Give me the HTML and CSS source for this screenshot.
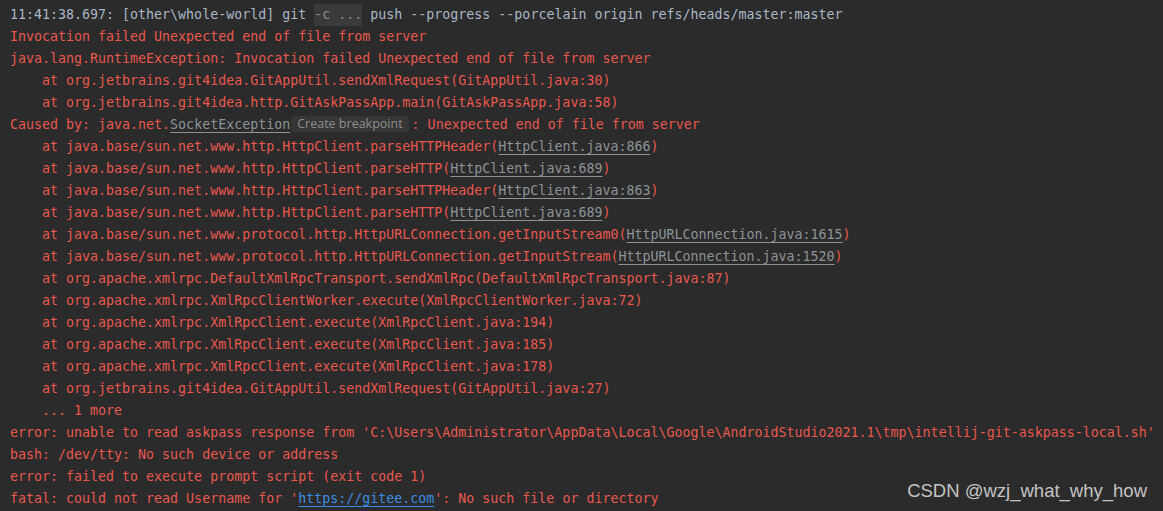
FILE: index.html
```html
<!DOCTYPE html>
<html lang="en">
<head>
    <meta charset="UTF-8">
    <title>Git Console</title>
    <link rel="stylesheet" href="styles.css">
</head>
<body>
    <main class="console">
        <div class="line sys">11:41:38.697: [other\whole-world] git <span class="fold">-c ...</span> push --progress --porcelain origin refs/heads/master:master</div>
        <div class="line err">Invocation failed Unexpected end of file from server</div>
        <div class="line err">java.lang.RuntimeException: Invocation failed Unexpected end of file from server</div>
        <div class="line err">    at org.jetbrains.git4idea.GitAppUtil.sendXmlRequest(GitAppUtil.java:30)</div>
        <div class="line err">    at org.jetbrains.git4idea.http.GitAskPassApp.main(GitAskPassApp.java:58)</div>
        <div class="line err">Caused by: java.net.<span class="ref">SocketException</span><span class="hint">Create breakpoint</span>: Unexpected end of file from server</div>
        <div class="line err">    at java.base/sun.net.www.http.HttpClient.parseHTTPHeader(<span class="ref">HttpClient.java:866</span>)</div>
        <div class="line err">    at java.base/sun.net.www.http.HttpClient.parseHTTP(<span class="ref">HttpClient.java:689</span>)</div>
        <div class="line err">    at java.base/sun.net.www.http.HttpClient.parseHTTPHeader(<span class="ref">HttpClient.java:863</span>)</div>
        <div class="line err">    at java.base/sun.net.www.http.HttpClient.parseHTTP(<span class="ref">HttpClient.java:689</span>)</div>
        <div class="line err">    at java.base/sun.net.www.protocol.http.HttpURLConnection.getInputStream0(<span class="ref">HttpURLConnection.java:1615</span>)</div>
        <div class="line err">    at java.base/sun.net.www.protocol.http.HttpURLConnection.getInputStream(<span class="ref">HttpURLConnection.java:1520</span>)</div>
        <div class="line err">    at org.apache.xmlrpc.DefaultXmlRpcTransport.sendXmlRpc(DefaultXmlRpcTransport.java:87)</div>
        <div class="line err">    at org.apache.xmlrpc.XmlRpcClientWorker.execute(XmlRpcClientWorker.java:72)</div>
        <div class="line err">    at org.apache.xmlrpc.XmlRpcClient.execute(XmlRpcClient.java:194)</div>
        <div class="line err">    at org.apache.xmlrpc.XmlRpcClient.execute(XmlRpcClient.java:185)</div>
        <div class="line err">    at org.apache.xmlrpc.XmlRpcClient.execute(XmlRpcClient.java:178)</div>
        <div class="line err">    at org.jetbrains.git4idea.GitAppUtil.sendXmlRequest(GitAppUtil.java:27)</div>
        <div class="line err">    ... 1 more</div>
        <div class="line err">error: unable to read askpass response from 'C:\Users\Administrator\AppData\Local\Google\AndroidStudio2021.1\tmp\intellij-git-askpass-local.sh'</div>
        <div class="line err">bash: /dev/tty: No such device or address</div>
        <div class="line err">error: failed to execute prompt script (exit code 1)</div>
        <div class="line err">fatal: could not read Username for '<span class="url">https://gitee.com</span>': No such file or directory</div>
        <div class="watermark">CSDN @wzj_what_why_how</div>
    </main>
</body>
</html>
```
FILE: styles.css
```css
/* Console look */
html, body {
    margin: 0;
    padding: 0;
    background-color: #2b2b2b;
    height: 100%;
    overflow: hidden;
}
.console {
    position: relative;
    height: 100%;
    padding: 4px 0 0 10px;
    box-sizing: border-box;
    font-family: 'DejaVu Sans Mono', 'Liberation Mono', monospace;
    font-size: 13.3px;
}
.line {
    white-space: pre;
    height: 22px;
    line-height: 22px;
}
.sys {
    color: #a9b7c6;
}
.err {
    color: #e8584f;
}
.fold {
    background-color: #3a3a3a;
    color: #8b8b8b;
    display: inline-block;
    line-height: 22px;
}
.ref {
    color: #8c9399;
    text-decoration: underline;
    text-underline-offset: 3px;
}
.url {
    color: #3d8be0;
    text-decoration: underline;
    text-underline-offset: 3px;
}
.hint {
    display: inline-block;
    font-family: 'Open Sans', 'Noto Sans', sans-serif;
    font-size: 12.5px;
    line-height: 16px;
    color: #8e8e8e;
    background-color: #363636;
    border-radius: 3px;
    padding: 0 6px;
    margin: 0 3px 0 1px;
    vertical-align: 1px;
}
.watermark {
    position: absolute;
    right: 16px;
    bottom: 9px;
    font-family: 'Liberation Sans', Arial, sans-serif;
    font-size: 18.5px;
    color: #c4c4c4;
}
```
